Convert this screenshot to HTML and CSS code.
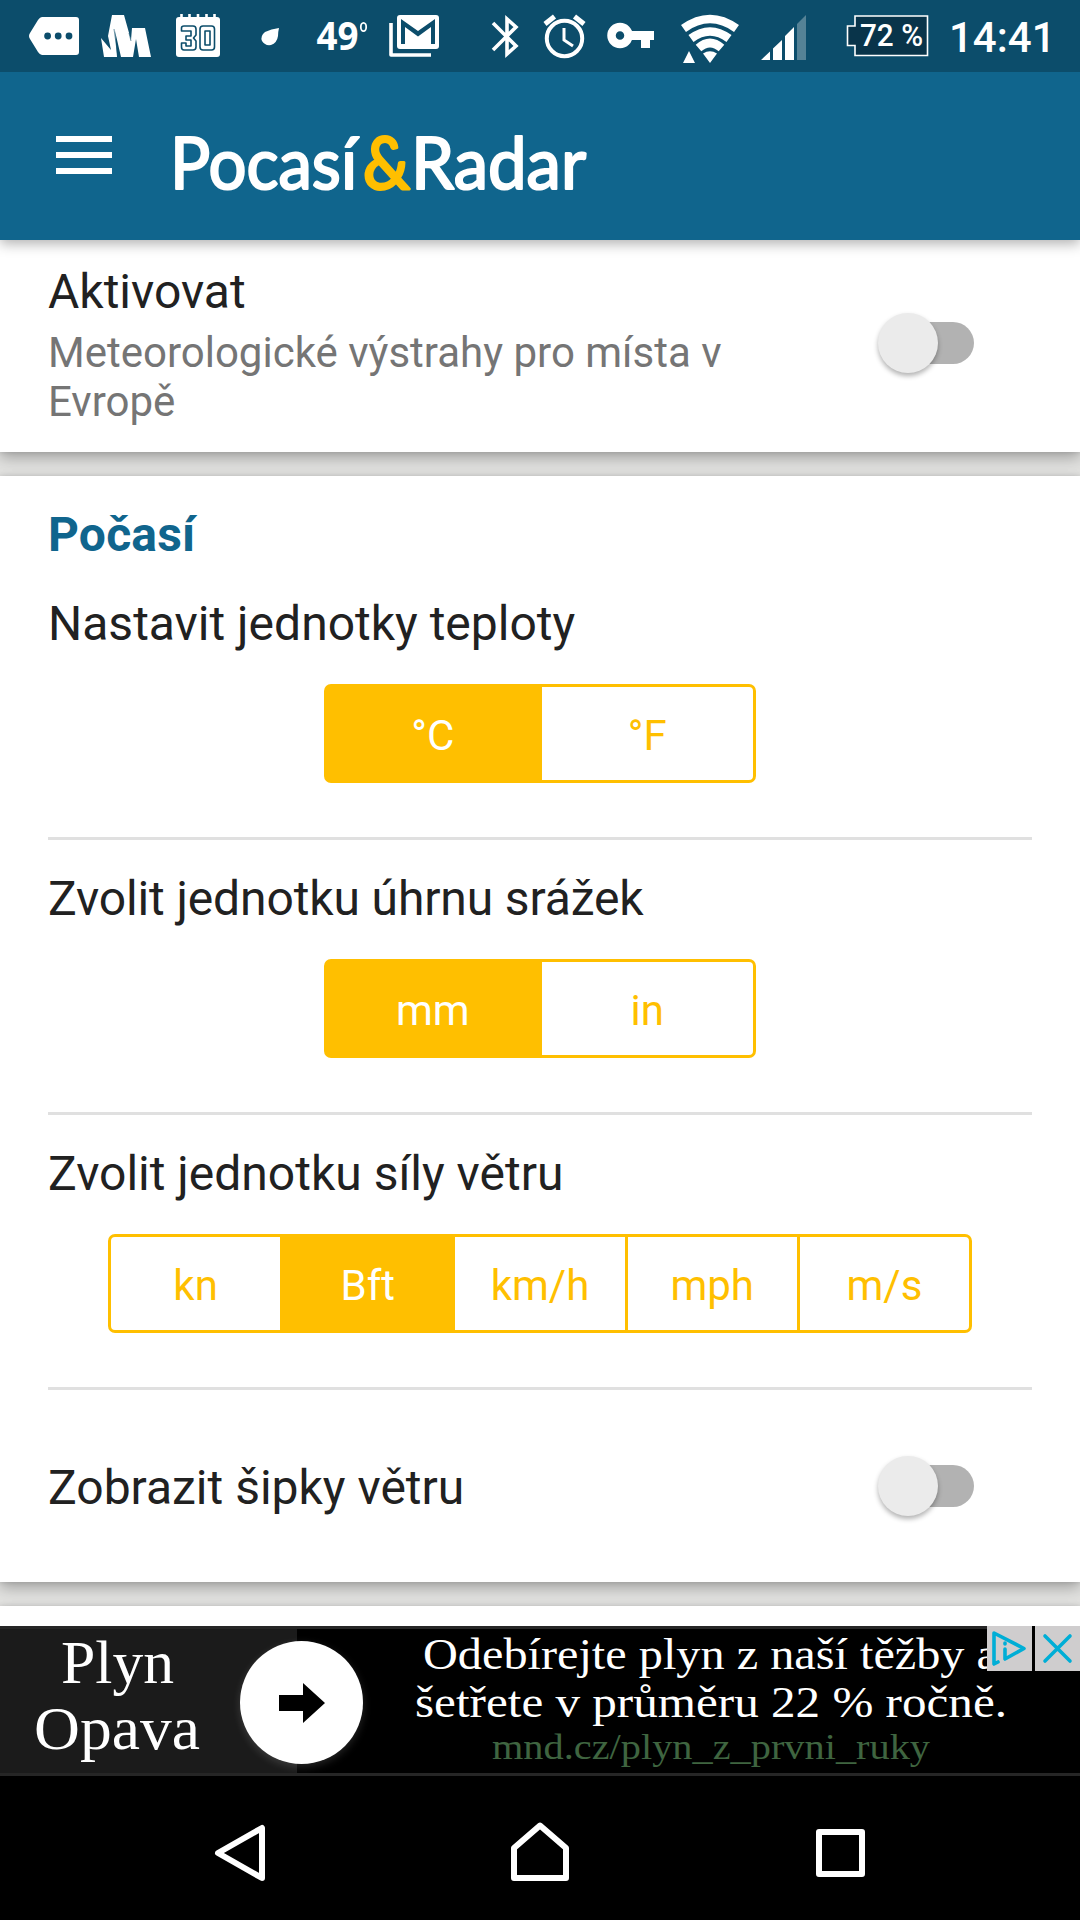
FILE: index.html
```html
<!DOCTYPE html>
<html lang="cs">
<head>
  <meta charset="UTF-8">
  <meta name="viewport" content="width=device-width, initial-scale=1">
  <title>Pocasí&amp;Radar</title>
  <link rel="stylesheet" href="styles.css">
</head>
<body>
  <!-- Status Bar -->
  <div class="status-bar">
    <svg width="90" height="72" viewBox="0 0 90 72">
      <path fill="#fff" d="M42 17H76Q79 17 79 20V52Q79 55 76 55H42Q40 55 38 52L30 39Q28 36 30 33L38 20Q40 17 42 17Z"/>
      <g fill="#0c4d6b"><circle cx="47.6" cy="36" r="3.4"/><circle cx="58.2" cy="36" r="3.4"/><circle cx="69" cy="36" r="3.4"/></g>
    </svg>
    <svg width="73" height="72" viewBox="90 0 73 72">
      <path fill="#fff" d="M112 15H124L131 40L132 28H145L151 57H139L136 39L133 57H121L115 31L117 57H104L101 38L111 50L108 36Z"/>
      <path stroke="#0c4d6b" stroke-width="0.6" d="M114 29L118 57M131 41L129 33"/>
    </svg>
    <svg width="77" height="72" viewBox="163 0 77 72">
      <rect x="176" y="17" width="44" height="40" rx="3" fill="#fff"/>
      <path stroke="#fff" stroke-width="2.6" d="M181.500 14V20M189.500 14V20M198 14V20M206.500 14V20M214.500 14V20"/>
      <g fill="none" stroke="#0c4d6b" stroke-width="1.6" stroke-linejoin="round">
        <path d="M181.500 31V28Q181.500 26 184 26H193Q196 26 196 29V35L193.500 38L196 41V47Q196 50 193 50H184Q181.500 50 181.500 47V43H186V46H191V40H186V36H191V31Z"/>
        <rect x="200" y="26" width="14.500" height="24" rx="3"/>
        <rect x="205" y="31" width="5" height="14"/>
      </g>
    </svg>
    <svg width="58" height="72" viewBox="240 0 58 72">
      <path fill="#fff" d="M279 28Q271 29 265 32Q260 36 262 41Q265 46 271 45Q277 43 278 36Q278 32 279 28Z"/>
    </svg>
    <svg class="temp" width="80" height="72" viewBox="298 0 80 72">
      <text x="316.500" y="50" font-size="40" textLength="42" lengthAdjust="spacingAndGlyphs">49</text>
      <ellipse cx="363.500" cy="27" rx="2.700" ry="4.200" fill="none" stroke="#fff" stroke-width="1.800"/>
    </svg>
    <svg width="82" height="72" viewBox="378 0 82 72">
      <rect x="397" y="15" width="42" height="34" rx="3" fill="#fff"/>
      <path fill="#0c4d6b" d="M401 44V19L418 31L435 19V44Z"/>
      <path fill="#fff" d="M405 44V27L418 36.500L431 27V44ZM404 19H432L418 28Z"/>
      <path fill="none" stroke="#fff" stroke-width="3.600" stroke-linejoin="round" d="M391 23V55H431"/>
    </svg>
    <svg width="70" height="72" viewBox="460 0 70 72">
      <path fill="none" stroke="#fff" stroke-width="3.600" d="M493 23L516 46L507 54V19L516 27L493 50"/>
    </svg>
    <svg width="66" height="72" viewBox="530 0 66 72">
      <g fill="none" stroke="#fff" stroke-width="4">
        <circle cx="564.500" cy="38.500" r="17.700"/>
        <path stroke-width="5" d="M545 24L554.500 16.500M574.500 16.500L584 24"/>
        <path stroke-width="3" d="M564 28V40L573 46"/>
      </g>
    </svg>
    <svg width="70" height="72" viewBox="596 0 70 72">
      <circle cx="620" cy="35.500" r="8.500" fill="none" stroke="#fff" stroke-width="8.500"/>
      <path fill="#fff" d="M630 31H654V40H650V48H641V40H630Z"/>
    </svg>
    <svg width="84" height="72" viewBox="666 0 84 72">
      <g fill="none" stroke="#fff" stroke-width="8.500">
        <path d="M683.500 28.500Q710 9.500 736.500 28.500"/>
        <path d="M691 38.500Q710 24.500 729 38.500"/>
        <path d="M698.500 48Q710 38 721.500 48"/>
      </g>
      <path fill="#fff" d="M703 53.500Q710 49 717 53.500L710 63ZM689 51L695 63H683Z"/>
    </svg>
    <svg width="76" height="72" viewBox="750 0 76 72">
      <path fill="#fff" d="M761 60L770 51.500V60ZM773 48.500L782 40V60H773ZM785 36L794 27V60H785Z"/>
      <path fill="#558296" d="M797 24L806 15V60H797Z"/>
    </svg>
    <svg class="battery" width="114" height="72" viewBox="826 0 114 72">
      <path fill="#09344a" stroke="#fff" stroke-width="1.600" d="M855 16H927.500V55.500H855V45.500H847.500V26H855Z"/>
      <text x="860" y="46" font-size="31.500" textLength="63" lengthAdjust="spacingAndGlyphs">72 %</text>
    </svg>
    <span class="clock">14:41</span>
  </div>

  <!-- Toolbar -->
  <header class="toolbar">
    <button class="menu-btn" aria-label="Menu"><i></i><i></i><i></i></button>
    <svg class="logo" width="440" height="100" viewBox="160 106 440 100">
      <text x="170" y="188.500" textLength="187" lengthAdjust="spacingAndGlyphs">Pocasí</text>
      <text class="amp" x="363" y="188.500" textLength="47" lengthAdjust="spacingAndGlyphs">&amp;</text>
      <text x="411" y="188.500" textLength="175" lengthAdjust="spacingAndGlyphs">Radar</text>
    </svg>
  </header>

  <!-- Settings -->
  <main class="settings">
    <section class="card warnings">
      <div class="row">
        <div class="row-text">
          <h3>Aktivovat</h3>
          <p>Meteorologické výstrahy pro místa v Evropě</p>
        </div>
        <div class="switch"><span></span></div>
      </div>
    </section>

    <section class="card weather">
      <h2>Počasí</h2>
      <div class="setting">
        <h3>Nastavit jednotky teploty</h3>
        <div class="segmented">
          <button class="active">°C</button><button>°F</button>
        </div>
      </div>
      <div class="setting rain">
        <h3>Zvolit jednotku úhrnu srážek</h3>
        <div class="segmented">
          <button class="active">mm</button><button>in</button>
        </div>
      </div>
      <div class="setting">
        <h3>Zvolit jednotku síly větru</h3>
        <div class="segmented wide">
          <button>kn</button><button class="active">Bft</button><button>km/h</button><button>mph</button><button>m/s</button>
        </div>
      </div>
      <div class="row arrows">
        <h3>Zobrazit šipky větru</h3>
        <div class="switch"><span></span></div>
      </div>
    </section>

    <section class="card next"></section>
  </main>

  <!-- Ad Banner -->
  <div class="ad">
    <div class="ad-title">
      <svg width="240" height="144" viewBox="0 1629 240 144">
        <text x="61" y="1683" font-size="62" textLength="113" lengthAdjust="spacingAndGlyphs">Plyn</text>
        <text x="34" y="1749" font-size="62" textLength="166" lengthAdjust="spacingAndGlyphs">Opava</text>
      </svg>
    </div>
    <div class="ad-arrow">
      <svg width="46" height="40" viewBox="0 0 46 40"><path d="M0 12H24V0L46 20L24 40V28H0Z"/></svg>
    </div>
    <svg class="ad-text" width="717" height="144" viewBox="363 1629 717 144">
      <text x="423" y="1668.500" font-size="45" textLength="575" lengthAdjust="spacingAndGlyphs">Odebírejte plyn z naší těžby a</text>
      <text x="415" y="1716.500" font-size="45" textLength="592" lengthAdjust="spacingAndGlyphs">šetřete v průměru 22 % ročně.</text>
      <text class="ad-url" x="492" y="1758.500" font-size="36" textLength="438" lengthAdjust="spacingAndGlyphs">mnd.cz/plyn_z_prvni_ruky</text>
    </svg>
    <div class="ad-choices">
      <svg width="45" height="45" viewBox="0 0 45 45">
        <path d="M11 36L7 38V7L37 22.500L18 33V23"/>
        <path d="M18 17V18"/>
      </svg>
      <svg width="45" height="45" viewBox="0 0 45 45">
        <path d="M10 10L35 35M35 10L10 35"/>
      </svg>
    </div>
  </div>

  <!-- Navigation Buttons -->
  <nav class="nav-bar">
    <svg width="56" height="64" viewBox="212 1821 56 64"><path d="M262 1828V1878L218 1853Z"/></svg>
    <svg width="64" height="64" viewBox="508 1821 64 64"><path d="M514 1878V1848L540 1825.500L566 1848V1878Z"/></svg>
    <svg width="56" height="64" viewBox="812 1821 56 64"><path d="M819 1832H862V1874H819Z"/></svg>
  </nav>
</body>
</html>
```
FILE: styles.css
```css
/* General Styles */
* {
  margin: 0;
  padding: 0;
  box-sizing: border-box;
}

body {
  width: 1080px;
  height: 1920px;
  overflow: hidden;
  display: flex;
  flex-direction: column;
  background: #000;
  font-family: Roboto, sans-serif;
  color: #212121;
}

svg {
  display: block;
  flex: none;
}

/* Status Bar */
.status-bar {
  height: 72px;
  display: flex;
  background: #0c4d6b;
  color: #fff;
  position: relative;
  z-index: 2;
}

.temp text {
  font-family: "Open Sans", sans-serif;
  font-weight: 700;
  fill: #fff;
}

.battery text {
  font-weight: 500;
  fill: #fff;
}

.clock {
  padding-left: 9px;
  font-size: 42px;
  font-weight: 500;
  line-height: 75px;
}

/* Toolbar */
.toolbar {
  height: 168px;
  padding: 34px 0 0 56px;
  display: flex;
  align-items: flex-start;
  background: #10658d;
  box-shadow: 0 4px 12px rgba(0, 0, 0, 0.3);
  z-index: 1;
}

.menu-btn {
  width: 56px;
  margin: 30px 48px 0 0;
  border: none;
  background: none;
  display: flex;
  flex-direction: column;
  gap: 10px;
}

.menu-btn i {
  width: 56px;
  height: 6px;
  background: #fff;
}

.logo text {
  font-family: Lato, sans-serif;
  font-size: 72px;
  font-weight: 400;
  fill: #fff;
  stroke: #fff;
  stroke-width: 2.2px;
  stroke-linejoin: round;
}

.logo .amp {
  fill: #ffbf00;
  stroke: #ffbf00;
  stroke-width: 3px;
}

/* Cards */
.settings {
  height: 1386px;
  display: flex;
  flex-direction: column;
  gap: 24px;
  background: #e2e2e0;
}

.card {
  padding: 0 48px;
  background: #fff;
  box-shadow: 0 6px 14px rgba(0, 0, 0, 0.28), 0 0 5px rgba(0, 0, 0, 0.12);
}

h2, h3 {
  font-size: 48px;
  line-height: 56px;
  font-weight: 400;
}

h2 {
  color: #10658d;
  font-weight: 700;
  letter-spacing: 0.2px;
}

.row {
  display: flex;
  align-items: center;
  justify-content: space-between;
}

.warnings {
  height: 212px;
}

.warnings .row {
  padding-top: 24px;
}

.warnings p {
  width: 720px;
  padding-top: 8px;
  margin-bottom: -5px;
  font-size: 42px;
  line-height: 49px;
  color: #757575;
}

.weather {
  height: 1106px;
  padding-top: 31px;
}

.setting {
  height: 275px;
  border-bottom: 3px solid #e0e0e0;
}

h2 + .setting {
  height: 277px;
  padding-top: 33px;
}

.setting h3 {
  padding-top: 31px;
  height: 119px;
}

h2 + .setting h3 {
  padding-top: 0;
  height: 88px;
}

.rain h3 {
  letter-spacing: -0.13px;
}

.next {
  height: 20px;
}

/* Segmented Buttons */
.segmented {
  width: 432px;
  height: 99px;
  margin: 0 auto;
  display: flex;
}

.segmented.wide {
  width: 864px;
}

.segmented button {
  flex: 1;
  padding-top: 4px;
  border: 3px solid #ffbf00;
  background: none;
  color: #ffbf00;
  font: 400 42px/49px Roboto, sans-serif;
}

/* Neighbours share one border */
.segmented button + button {
  margin-left: -3px;
}

.segmented button:first-child {
  border-radius: 7px 0 0 7px;
}

.segmented button:last-child {
  border-radius: 0 7px 7px 0;
}

.segmented .active {
  background: #ffbf00;
  color: #fff;
}

/* Switch */
.switch {
  width: 88px;
  height: 42px;
  margin-right: 58px;
  display: flex;
  align-items: center;
  border-radius: 21px;
  background: #b2b2b2;
}

.switch span {
  flex: none;
  width: 60px;
  height: 60px;
  margin-left: -8px;
  border-radius: 50%;
  background: #ebebeb;
  box-shadow: 0 3px 5px rgba(0, 0, 0, 0.3);
}

.arrows {
  height: 192px;
}

.arrows h3 {
  padding-top: 4px;
}

/* Ad Banner */
.ad {
  position: relative;
  height: 150px;
  display: flex;
  align-items: center;
  border-top: 3px solid #262626;
  border-bottom: 3px solid #262626;
  background: linear-gradient(90deg, #1b1b1b 297px, #000 297px);
  z-index: 1;
}

.ad text {
  font-family: "Liberation Serif", serif;
  fill: #fff;
}

.ad .ad-url {
  fill: #3f6540;
}

.ad-arrow {
  flex: none;
  width: 123px;
  height: 123px;
  margin-top: 3px;
  display: flex;
  align-items: center;
  justify-content: center;
  border-radius: 50%;
  background: #fff;
  box-shadow: 0 3px 8px rgba(255, 255, 255, 0.15);
}

.ad-choices {
  position: absolute;
  top: -3px;
  right: 0;
  display: flex;
  gap: 3px;
  background: #000;
}

.ad-choices svg {
  background: #cfcdce;
  fill: none;
  stroke: #00aed6;
  stroke-width: 3.6;
  stroke-linecap: round;
  stroke-linejoin: round;
}

/* Navigation Buttons */
.nav-bar {
  height: 144px;
  padding: 45px 212px 0;
  display: flex;
  justify-content: space-between;
  background: #000;
}

.nav-bar svg {
  fill: none;
  stroke: #fff;
  stroke-width: 6;
  stroke-linejoin: round;
}
```
